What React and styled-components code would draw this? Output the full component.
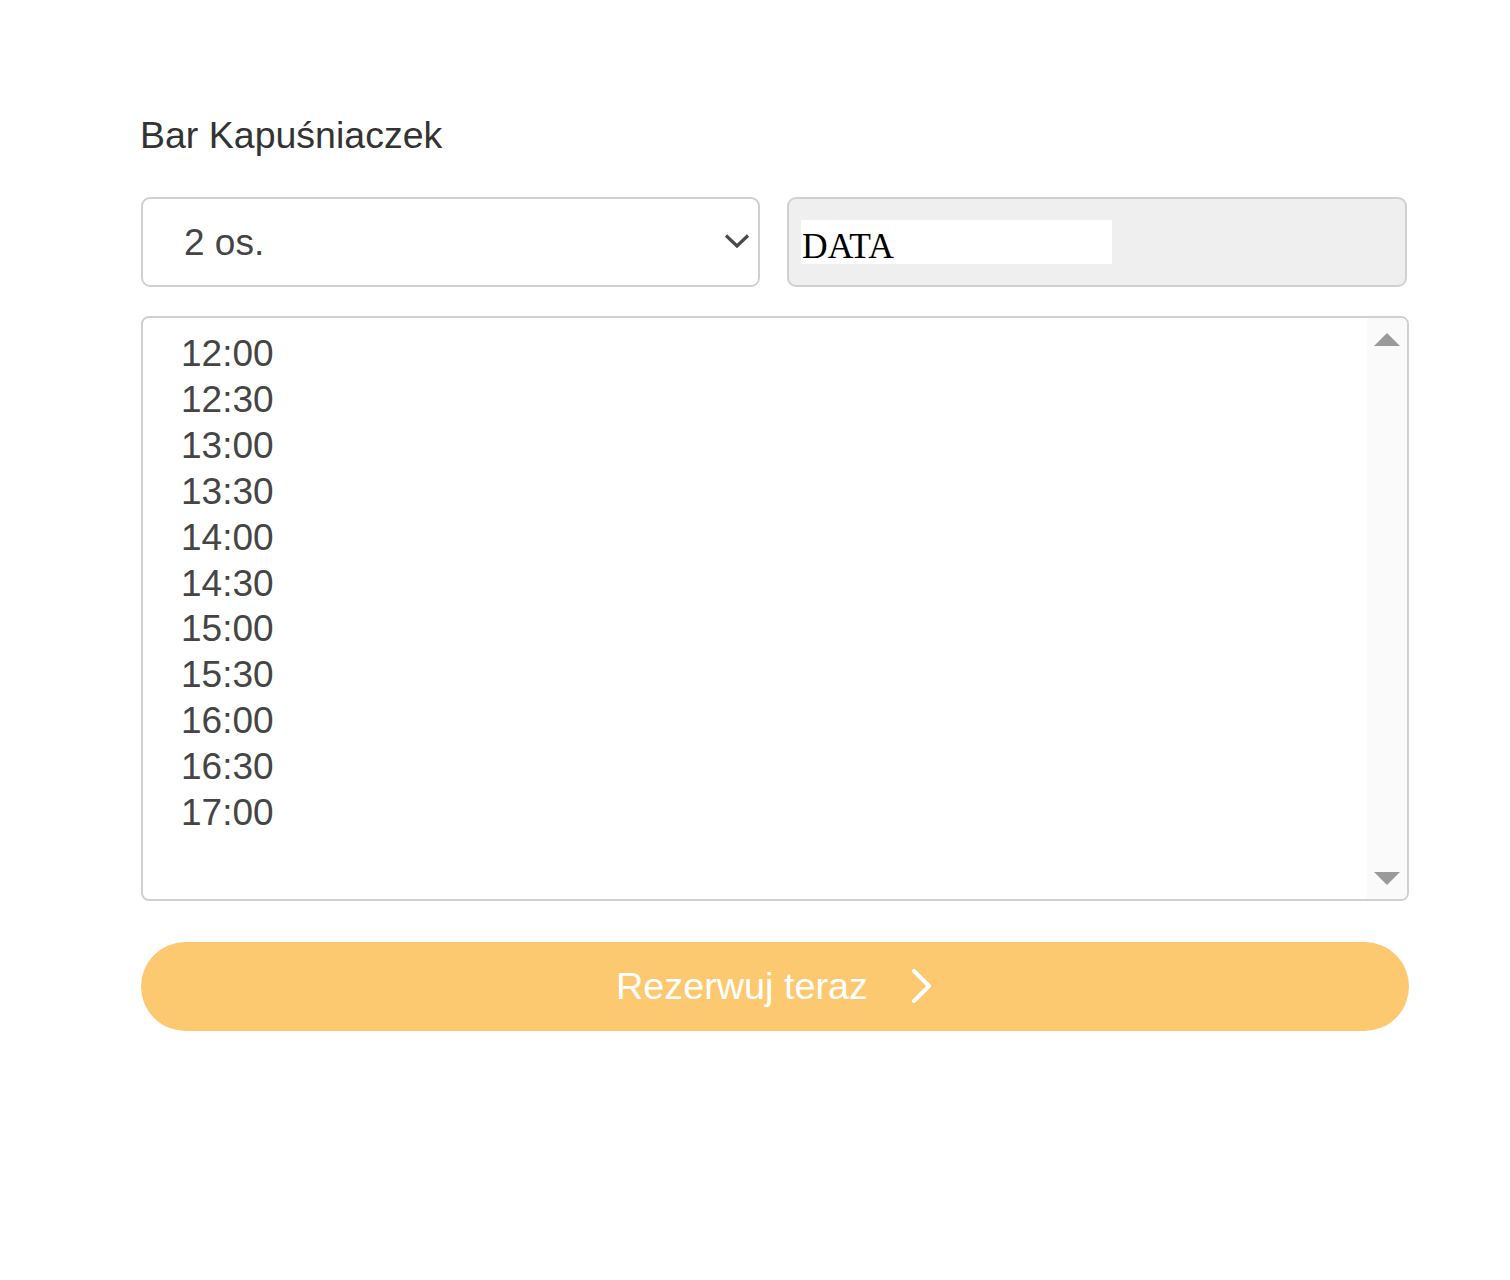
import React from "react";
import styled, { createGlobalStyle } from "styled-components";

const times = [
  "12:00",
  "12:30",
  "13:00",
  "13:30",
  "14:00",
  "14:30",
  "15:00",
  "15:30",
  "16:00",
  "16:30",
  "17:00",
];

export default function App() {
  return (
    <>
      <GlobalStyle />
      <Page>
        <Title>Bar Kapuśniaczek</Title>
        <Row>
          <SelectBox>
            <span>2 os.</span>
            <svg width="26" height="16" viewBox="0 0 26 16">
              <path
                d="M2 2.5 L13 13 L24 2.5"
                fill="none"
                stroke="#4a4a4a"
                strokeWidth="3.2"
              />
            </svg>
          </SelectBox>
          <DateBox>
            <DateField>DATA</DateField>
          </DateBox>
        </Row>
        <ListBox>
          <Options>
            {times.map((t) => (
              <Option key={t}>{t}</Option>
            ))}
          </Options>
          <Scrollbar>
            <Arrow $dir="up" />
            <Arrow $dir="down" />
          </Scrollbar>
        </ListBox>
        <BookButton>
          Rezerwuj teraz
          <svg width="24" height="34" viewBox="0 0 24 34">
            <path
              d="M4 2 L19 17 L4 32"
              fill="none"
              stroke="#fff"
              strokeWidth="4"
              strokeLinecap="round"
              strokeLinejoin="round"
            />
          </svg>
        </BookButton>
      </Page>
    </>
  );
}

// styling
const GlobalStyle = createGlobalStyle`
  body {
    margin: 0;
    background: #fff;
    font-family: "Liberation Sans", Arial, sans-serif;
  }
`;

const Page = styled.div`
  width: 1268px;
  padding: 114px 0 0 141px;
`;

const Title = styled.h1`
  margin: 0 0 41px -1px;
  font-size: 37.5px;
  line-height: 42px;
  font-weight: 400;
  color: #333;
`;

const Row = styled.div`
  display: grid;
  grid-template-columns: 619px 620px;
  gap: 27px;
  margin-bottom: 29px;
`;

const SelectBox = styled.div`
  box-sizing: border-box;
  height: 90px;
  display: flex;
  align-items: center;
  justify-content: space-between;
  padding: 0 8px 0 41px;
  border: 2px solid #d0d0d0;
  border-radius: 9px;
  background: #fff;
  font-size: 37px;
  color: #444;

  span {
    padding-top: 2px;
  }
  svg {
    margin-top: -2px;
  }
`;

const DateBox = styled.div`
  box-sizing: border-box;
  height: 90px;
  padding: 21px 0 0 12px;
  border: 2px solid #d0d0d0;
  border-radius: 9px;
  background: #efefef;
`;

const DateField = styled.div`
  width: 311px;
  height: 44px;
  background: #fff;
  font-family: "Liberation Serif", "Times New Roman", serif;
  font-size: 35.5px;
  line-height: 52px;
  color: #000;
  padding-left: 1px;
  box-sizing: border-box;
`;

const ListBox = styled.div`
  box-sizing: border-box;
  width: 1268px;
  height: 585px;
  display: flex;
  border: 2px solid #d0d0d0;
  border-radius: 8px;
  background: #fff;
  overflow: hidden;
`;

const Options = styled.div`
  flex: 1;
  padding: 13px 0 0 38px;
`;

const Option = styled.div`
  font-size: 37px;
  line-height: 45.9px;
  color: #454545;
`;

const Scrollbar = styled.div`
  width: 40px;
  background: #fafafa;
  display: flex;
  flex-direction: column;
  justify-content: space-between;
  align-items: center;
  padding: 15px 0 14px;
`;

const Arrow = styled.div`
  width: 0;
  height: 0;
  border-left: 13px solid transparent;
  border-right: 13px solid transparent;
  ${(p) =>
    p.$dir === "up"
      ? "border-bottom: 13px solid #9a9a9a;"
      : "border-top: 13px solid #9a9a9a;"}
`;

const BookButton = styled.button`
  margin-top: 41px;
  width: 1268px;
  height: 89px;
  border: none;
  border-radius: 45px;
  background: #fcc971;
  display: flex;
  align-items: center;
  justify-content: center;
  gap: 42px;
  font-family: "Liberation Sans", Arial, sans-serif;
  font-size: 37.8px;
  color: #fff;
  cursor: pointer;
  padding: 0;

  svg {
    margin-top: -2px;
  }
`;
